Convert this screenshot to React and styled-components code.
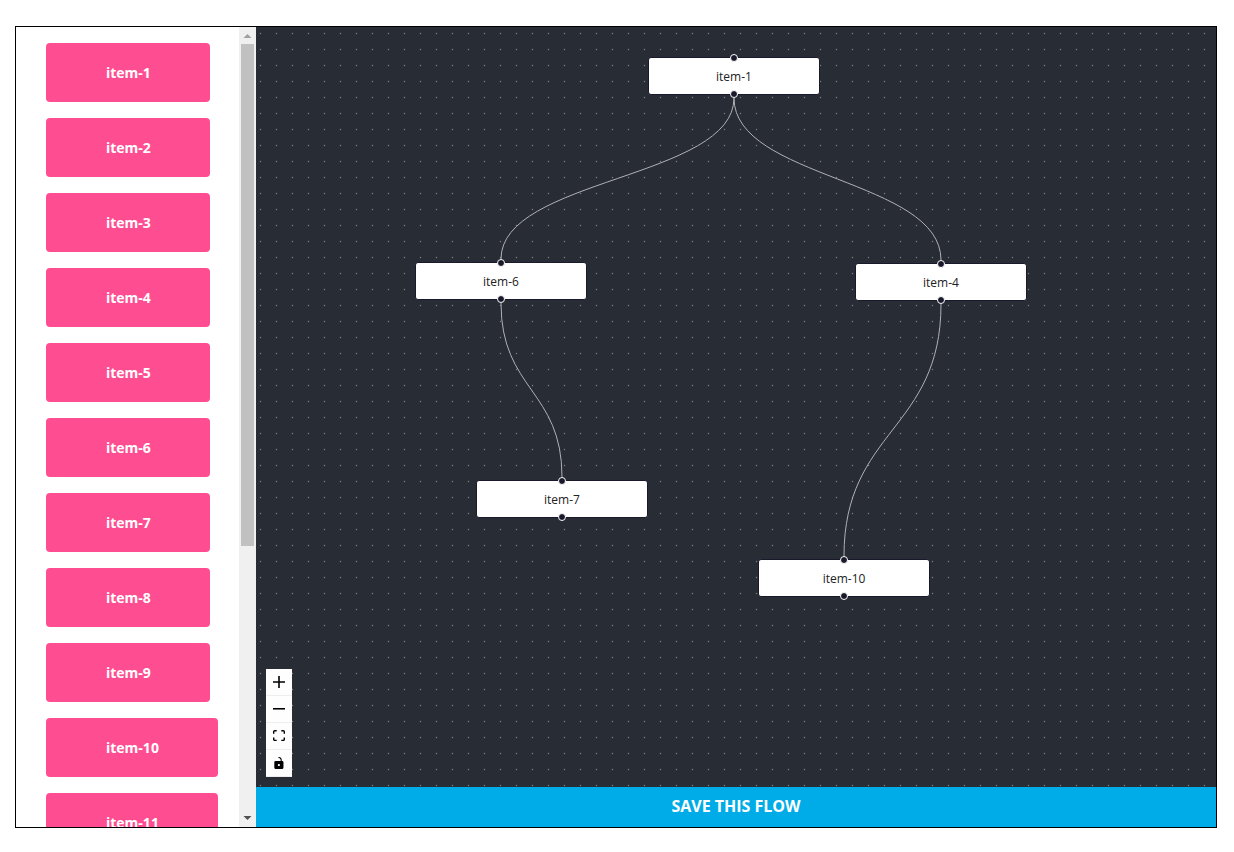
import React from "react";
import styled, { createGlobalStyle } from "styled-components";

const GlobalStyle = createGlobalStyle`
  *, *::before, *::after { box-sizing: border-box; }
  body {
    margin: 0;
    background: #ffffff;
    font-family: "Open Sans", "Noto Sans", sans-serif;
  }
`;

const Page = styled.div`
  display: flex;
  height: 100vh;
  min-height: 400px;
  padding: 26px 17px 24px 15px;
`;

const Frame = styled.main`
  display: flex;
  flex: 1;
  min-width: 0;
  border: 1px solid #000000;
`;

const Sidebar = styled.aside`
  display: flex;
  flex: 0 0 240px;
  overflow: hidden;
`;

const ItemList = styled.ul`
  display: flex;
  flex: 1;
  flex-direction: column;
  align-items: flex-start;
  gap: 16px;
  margin: 0;
  padding: 16px 0 16px 30px;
  list-style: none;
`;

const Item = styled.li`
  flex: none;
  padding: 0 59px 0 60px;
  border-radius: 4px;
  background: #ff4d92;
  color: #ffffff;
  font-size: 14px;
  font-weight: 700;
  line-height: 59px;
  cursor: grab;
`;

const Scrollbar = styled.div`
  display: flex;
  flex: 0 0 17px;
  flex-direction: column;
  background: #f0f0f0;
`;

const ScrollArrow = styled.svg`
  flex: none;
  width: 17px;
  height: 17px;
  fill: ${(p) => (p.$dim ? "#a0a0a0" : "#505050")};
`;

const ScrollTrack = styled.div`
  display: grid;
  flex: 1;
  grid-template-rows: 502fr 264fr;
  padding: 0 2px;
`;

const ScrollThumb = styled.div`
  background: #c1c1c1;
`;

const Workspace = styled.section`
  display: flex;
  flex: 1;
  flex-direction: column;
  min-width: 0;
`;

const Canvas = styled.div`
  position: relative;
  flex: 1;
  overflow: hidden;
  background: #282c34;
`;

const Layer = styled.svg`
  position: absolute;
  inset: 0;
  width: 100%;
  height: 100%;
`;

const Edge = styled.path`
  fill: none;
  stroke: #b1b1b7;
  stroke-width: 1;
`;

const Node = styled.div`
  position: absolute;
  left: ${(p) => p.$x}px;
  top: ${(p) => p.$y}px;
  width: 172px;
  padding-top: 2px;
  transform: translate(-50%, -50%);
  border: 1px solid #1a192b;
  border-radius: 3px;
  background: #ffffff;
  color: #222222;
  font-size: 12px;
  line-height: 34px;
  text-align: center;
`;

const Handle = styled.span`
  position: absolute;
  left: 81px;
  ${(p) => (p.$side === "top" ? "top: -4px;" : "bottom: -4px;")}
  width: 8px;
  height: 8px;
  border: 1px solid #ffffff;
  border-radius: 50%;
  background: #1a192b;
`;

const Controls = styled.div`
  position: absolute;
  left: 10px;
  bottom: 10px;
  display: flex;
  flex-direction: column;
`;

const ControlButton = styled.button`
  display: flex;
  align-items: center;
  justify-content: center;
  width: 26px;
  height: 27px;
  padding: 0;
  border: 0;
  border-bottom: 1px solid #eeeeee;
  background: #fefefe;
  cursor: pointer;

  svg {
    width: 12px;
    max-height: 12px;
  }
`;

const SaveButton = styled.button`
  flex: none;
  height: 40px;
  padding: 0 0 2px;
  border: 0;
  background: #00ace8;
  color: #ffffff;
  font-family: inherit;
  font-size: 16px;
  font-weight: 700;
  line-height: 38px;
  text-transform: uppercase;
  cursor: pointer;
`;

const items = Array.from({ length: 11 }, (_, i) => `item-${i + 1}`);

const nodes = {
  "item-1": { x: 478, y: 49 },
  "item-6": { x: 245, y: 254 },
  "item-4": { x: 685, y: 255 },
  "item-7": { x: 306, y: 472 },
  "item-10": { x: 588, y: 551 },
};

const edges = [
  ["item-1", "item-6"],
  ["item-1", "item-4"],
  ["item-6", "item-7"],
  ["item-4", "item-10"],
];

const controls = [
  {
    label: "Zoom in",
    viewBox: "0 0 32 32",
    path: "M32 18.133H18.133V32h-4.266V18.133H0v-4.266h13.867V0h4.266v13.867H32z",
  },
  { label: "Zoom out", viewBox: "0 0 32 5", path: "M0 0h32v4.2H0z" },
  {
    label: "Fit view",
    viewBox: "0 0 32 30",
    path: "M3.692 4.63c0-.53.4-.938.939-.938h5.215V0H4.708C2.13 0 0 2.054 0 4.63v5.216h3.692V4.631zM27.354 0h-5.2v3.692h5.17c.53 0 .984.4.984.939v5.215H32V4.631A4.624 4.624 0 0027.354 0zm.954 24.83c0 .532-.4.94-.939.94h-5.215v3.768h5.215c2.577 0 4.631-2.13 4.631-4.707v-5.139h-3.692v5.139zm-23.677.94c-.531 0-.939-.4-.939-.94v-5.138H0v5.139c0 2.577 2.13 4.707 4.708 4.707h5.138V25.77H4.631z",
  },
  {
    label: "Toggle interactivity",
    viewBox: "0 0 25 32",
    path: "M21.333 10.667H19.81V7.619C19.81 3.429 16.38 0 12.19 0c-4.114 1.828-1.37 2.133.305 2.438 1.676.305 4.42 2.59 4.42 5.181v3.048H3.047A3.056 3.056 0 000 13.714v15.238A3.056 3.056 0 003.048 32h18.285a3.056 3.056 0 003.048-3.048V13.714a3.056 3.056 0 00-3.048-3.047zM12.19 24.533a3.056 3.056 0 01-3.047-3.047 3.056 3.056 0 013.047-3.048 3.056 3.056 0 013.048 3.048 3.056 3.056 0 01-3.048 3.047z",
  },
];

function edgePath([from, to]) {
  const a = nodes[from];
  const b = nodes[to];
  const startY = a.y + 22;
  const endY = b.y - 22;
  const midY = (startY + endY) / 2;
  return `M${a.x},${startY} C${a.x},${midY} ${b.x},${midY} ${b.x},${endY}`;
}

export default function App() {
  return (
    <Page>
      <GlobalStyle />
      <Frame>
        <Sidebar>
          <ItemList>
            {items.map((name) => (
              <Item key={name} draggable>
                {name}
              </Item>
            ))}
          </ItemList>
          <Scrollbar aria-hidden="true">
            <ScrollArrow $dim viewBox="0 0 17 17">
              <path d="M4.5 11 8.5 7l4 4z" />
            </ScrollArrow>
            <ScrollTrack>
              <ScrollThumb />
            </ScrollTrack>
            <ScrollArrow viewBox="0 0 17 17">
              <path d="M4.5 6h8l-4 4z" />
            </ScrollArrow>
          </Scrollbar>
        </Sidebar>
        <Workspace>
          <Canvas>
            <Layer aria-hidden="true">
              <defs>
                <pattern id="dots" width="16" height="16" patternUnits="userSpaceOnUse">
                  <circle cx="4.5" cy="6.5" r="0.7" fill="#81818a" />
                </pattern>
              </defs>
              <rect width="100%" height="100%" fill="url(#dots)" />
              {edges.map((edge) => (
                <Edge key={edge.join()} d={edgePath(edge)} />
              ))}
            </Layer>
            {Object.entries(nodes).map(([name, { x, y }]) => (
              <Node key={name} $x={x} $y={y}>
                <Handle $side="top" />
                {name}
                <Handle $side="bottom" />
              </Node>
            ))}
            <Controls>
              {controls.map(({ label, viewBox, path }) => (
                <ControlButton key={label} type="button" aria-label={label}>
                  <svg viewBox={viewBox}>
                    <path d={path} />
                  </svg>
                </ControlButton>
              ))}
            </Controls>
          </Canvas>
          <SaveButton type="button">Save this flow</SaveButton>
        </Workspace>
      </Frame>
    </Page>
  );
}
